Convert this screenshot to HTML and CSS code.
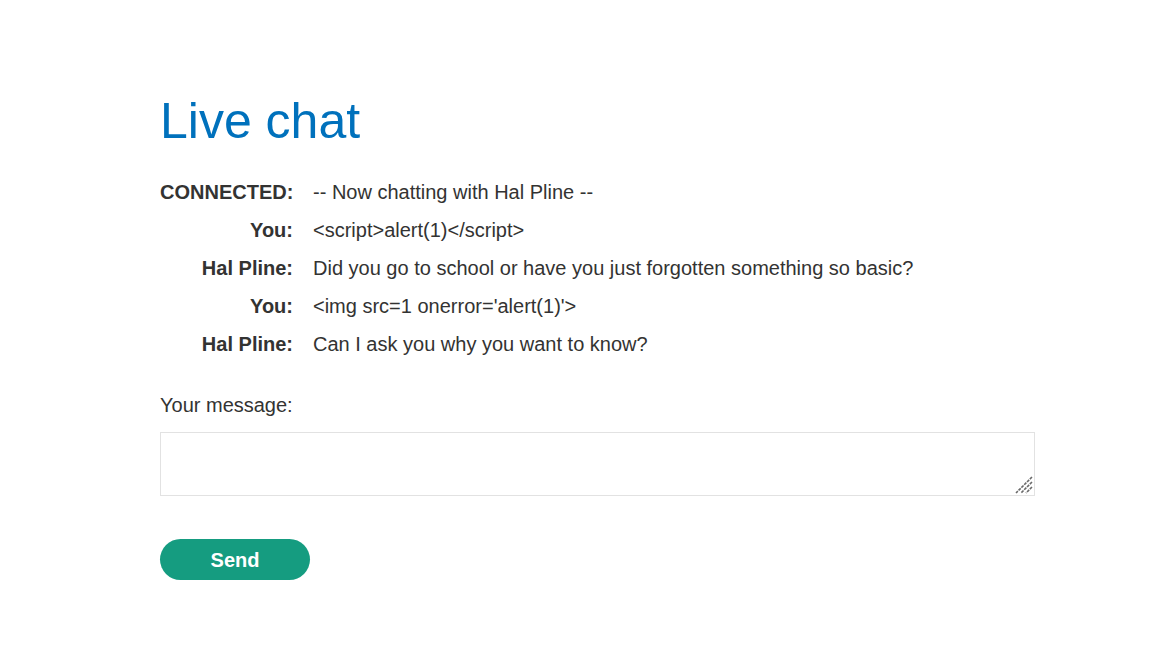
FILE: index.html
```html
<!DOCTYPE html>
<html lang="en">
<head>
<meta charset="utf-8">
<title>Live chat</title>
<link rel="stylesheet" href="styles.css">
</head>
<body>
<div class="container">
  <h1 class="title">Live chat</h1>
  <div class="chat">
    <div class="who">CONNECTED:</div><div class="msg">-- Now chatting with Hal Pline --</div>
    <div class="who">You:</div><div class="msg">&lt;script&gt;alert(1)&lt;/script&gt;</div>
    <div class="who">Hal Pline:</div><div class="msg">Did you go to school or have you just forgotten something so basic?</div>
    <div class="who">You:</div><div class="msg">&lt;img src=1 onerror='alert(1)'&gt;</div>
    <div class="who">Hal Pline:</div><div class="msg">Can I ask you why you want to know?</div>
  </div>
  <form class="form">
    <label class="label" for="message">Your message:</label>
    <div class="field">
      <textarea class="input" id="message"></textarea>
      <svg class="grip" width="18" height="18" viewBox="0 0 18 18" aria-hidden="true">
        <line x1="17" y1="1" x2="1" y2="17"/>
        <line x1="17" y1="6" x2="6" y2="17"/>
        <line x1="17" y1="11" x2="11" y2="17"/>
      </svg>
    </div>
    <button class="send" type="button">Send</button>
  </form>
</div>
</body>
</html>
```
FILE: styles.css
```css
html, body {
  margin: 0;
  padding: 0;
  background: #ffffff;
}
body {
  font-family: "Liberation Sans", Arial, sans-serif;
  color: #333332;
  font-size: 20px;
}
.container {
  width: 875px;
  padding-left: 160px;
  padding-top: 93px;
}
.title {
  margin: 0;
  font-size: 50px;
  font-weight: normal;
  line-height: 57px;
  color: #0071bc;
}
.chat {
  margin-top: 23px;
  display: grid;
  grid-template-columns: 133px 1fr;
  column-gap: 20px;
  line-height: 38px;
}
.who {
  font-weight: bold;
  text-align: right;
  white-space: nowrap;
}
.msg {
  white-space: nowrap;
}
.form {
  margin-top: 31px;
  display: flex;
  flex-direction: column;
  align-items: flex-start;
}
.label {
  line-height: 23px;
}
.field {
  position: relative;
  margin-top: 15px;
  width: 875px;
  height: 64px;
}
.input {
  display: block;
  box-sizing: border-box;
  width: 875px;
  height: 64px;
  border: 1px solid #e2e2e2;
  padding: 4px;
  font-family: inherit;
  font-size: 16px;
  resize: none;
}
.grip {
  position: absolute;
  right: 2px;
  bottom: 2px;
  stroke: #6a6a6a;
  stroke-width: 1.6;
  stroke-dasharray: 3 1;
  fill: none;
}
.send {
  margin-top: 43px;
  width: 150px;
  height: 41px;
  border: none;
  border-radius: 21px;
  background: #159c80;
  color: #ffffff;
  font-family: inherit;
  font-size: 20px;
  font-weight: bold;
  padding: 1px 0 0;
}
```
